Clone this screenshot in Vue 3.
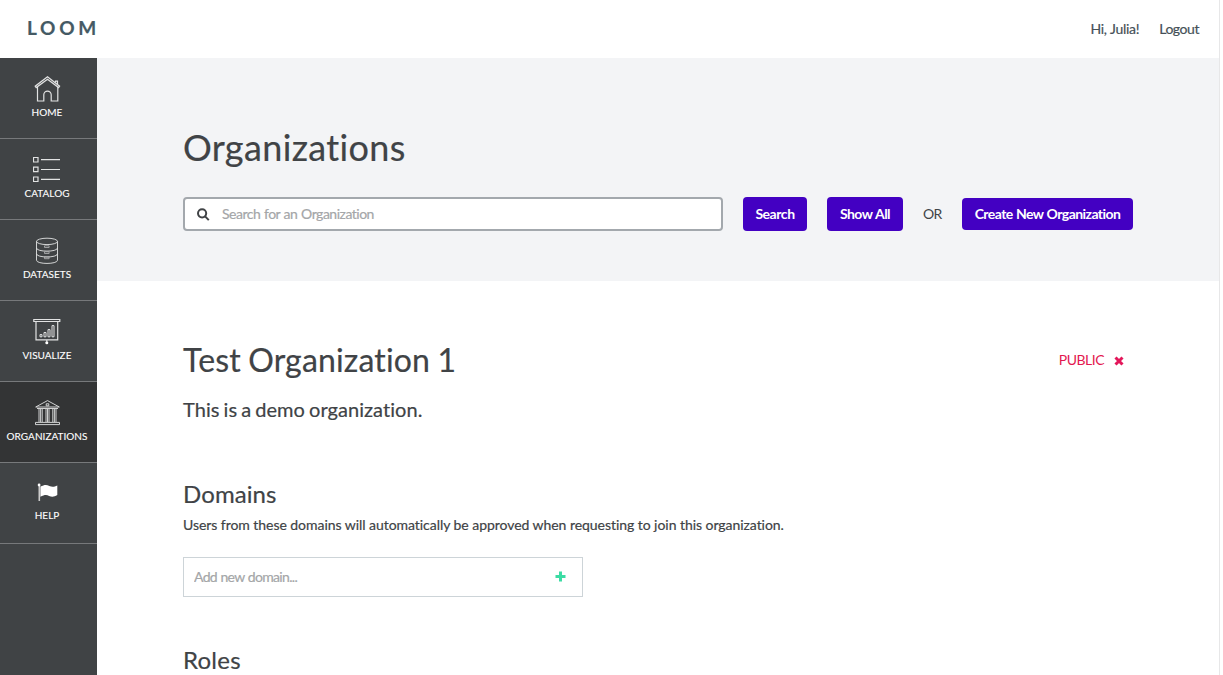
<script setup>
import { ref } from 'vue'

const items = [
  { id: 'home', label: 'Home' },
  { id: 'catalog', label: 'Catalog' },
  { id: 'datasets', label: 'Datasets' },
  { id: 'visualize', label: 'Visualize' },
  { id: 'organizations', label: 'Organizations' },
  { id: 'help', label: 'Help' },
]
const active = ref('organizations')
const query = ref('')
const domain = ref('')
</script>

<template>
  <div class="app">
    <header class="topbar">
      <div class="logo">LOOM</div>
      <nav class="account">
        <a class="hi">Hi, Julia!</a>
        <a class="logout">Logout</a>
      </nav>
    </header>
    <div class="body">
      <aside class="sidebar">
        <a
          v-for="item in items"
          :key="item.id"
          class="item"
          :class="[item.id, { active: active === item.id }]"
          @click="active = item.id"
        >
          <svg v-if="item.id === 'home'" class="icon" viewBox="0 0 30 30">
            <path d="M3.2 12.6 2.2 11.2 14.5 1.8 26.6 11.2 25.6 12.6 14.5 4.2Z" />
            <path d="M4.5 12v14h6.3v-6.2a3.4 3.4 0 0 1 7.4 0V26h6.6V12M22.5 7.5V6.2h2v3" />
          </svg>
          <svg v-else-if="item.id === 'catalog'" class="icon" viewBox="0 0 30 30">
            <path d="M.5 1.5h4.5v4.5h-4.5zM.5 11.2h4.5v4.5h-4.5zM.5 21h4.5v4.5h-4.5zM8 3.7h19M8 13.5h19M8 23.3h19" />
          </svg>
          <svg v-else-if="item.id === 'datasets'" class="icon thin" viewBox="0 0 30 30">
            <ellipse cx="14" cy="4.4" rx="10.5" ry="3.2" />
            <path d="M3.5 4.4v18.8c0 4.3 21 4.3 21 0V4.4M3.5 11c0 4.2 21 4.2 21 0M3.5 16.8c0 4.2 21 4.2 21 0" />
            <path class="slots" d="M11.5 8.8h4.6v1.7h-4.6zM11.5 14.8h4.6v1.7h-4.6zM11.5 20h4.6v1.7h-4.6z" />
          </svg>
          <svg v-else-if="item.id === 'visualize'" class="icon" viewBox="0 0 30 30">
            <path d="M.8 1.5h26v2h-26zM3 3.5v18.3h21.7V3.5M13.8 21.8v2" />
            <circle class="solid" cx="13.8" cy="24.7" r="1.5" />
            <path class="bars" d="M7 16.6h2v2.2h-2zM11 14.5h2v4.3h-2zM15 11.6h2v7.2h-2zM19 7.6h2v11.2h-2z" />
          </svg>
          <svg v-else-if="item.id === 'organizations'" class="icon thin" viewBox="0 0 30 30">
            <path d="M2.7 8 14.5 1.6 26.3 8ZM4 9.5h21M13.2 4.8h2.6v2h-2.6z" />
            <path d="M6 10V23M7.6 10V23M9.2 10V23M13 10V23M14.5 10V23M16 10V23M19.8 10V23M21.4 10V23M23 10V23" />
            <path d="M2.5 25.6v-2.2h24v2.2z" />
          </svg>
          <svg v-else class="icon flag" viewBox="0 0 30 30">
            <path class="pole" d="M6.3 4.5V20" />
            <circle class="solid" cx="6.1" cy="4" r="1.4" />
            <path class="solid" d="M7.4 5.6C11.3 3.8 13.4 3.5 16.3 5c3 1.4 5.2.8 8-.5V14c-3 1.9-5.4 2.2-8.2.9-3-1.5-5.2-.7-8.7.9Z" />
          </svg>
          <span class="label">{{ item.label }}</span>
        </a>
      </aside>
      <main class="main">
        <section class="hero">
          <h1 class="title">Organizations</h1>
          <form class="search-row" @submit.prevent>
            <label class="search-box">
              <svg class="glass" viewBox="0 0 13 13">
                <circle cx="5.1" cy="5.3" r="4.1" />
                <path d="M8.1 8.4 11.8 12.1" />
              </svg>
              <input v-model="query" class="search-input" placeholder="Search for an Organization" />
            </label>
            <button class="btn search">Search</button>
            <button class="btn show">Show All</button>
            <span class="or">OR</span>
            <button class="btn create">Create New Organization</button>
          </form>
        </section>
        <section class="content">
          <div class="org-head">
            <h2 class="org-name">Test Organization 1</h2>
            <span class="visibility">
              PUBLIC
              <svg class="cross" viewBox="0 0 10 10"><path d="M1.5 1.5 8.5 8.5M8.5 1.5 1.5 8.5" /></svg>
            </span>
          </div>
          <p class="desc">This is a demo organization.</p>
          <h3 class="sub domains">Domains</h3>
          <p class="hint">Users from these domains will automatically be approved when requesting to join this organization.</p>
          <label class="domain-box">
            <input v-model="domain" class="domain-input" placeholder="Add new domain..." />
            <svg class="plus" viewBox="0 0 11 11"><path d="M5.5.5v10M.5 5.5h10" /></svg>
          </label>
          <h3 class="sub roles">Roles</h3>
        </section>
      </main>
    </div>
  </div>
</template>

<style>
html, body { margin: 0; overflow: hidden; background: #fff; }
</style>

<style scoped>
.app {
  box-sizing: border-box;
  width: 1220px;
  height: 675px;
  overflow: hidden;
  display: flex;
  flex-direction: column;
  border-right: 1px solid #e7e7e8;
  font-family: Lato, "Liberation Sans", sans-serif;
  font-size: 14px;
  font-variant-ligatures: none;
  -webkit-text-stroke: .2px currentColor;
  color: #404346;
  white-space: nowrap;
}
h1, h2, h3, p { margin: 0; font-weight: 400; }
.topbar {
  height: 58px;
  flex: none;
  display: flex;
  justify-content: space-between;
  padding: 0 20px 0 27px;
  color: #455a64;
}
.logo { font-size: 19px; line-height: 56px; font-weight: 700; letter-spacing: 3.7px; }
.account { display: flex; gap: 20px; line-height: 58px; color: #455057; letter-spacing: -.3px; word-spacing: .6px; }
.logout { letter-spacing: -.45px; }
.body { flex: 1; min-height: 0; display: flex; }
.sidebar { width: 97px; flex: none; background: #404345; }
.item {
  box-sizing: border-box;
  height: 81px;
  display: flex;
  flex-direction: column;
  align-items: center;
  padding-top: 17px;
  border-bottom: 1px solid #77797b;
  color: #fff;
  cursor: pointer;
}
.item.active { background: #333435; }
.item.help { padding-top: 18px; }
.icon {
  width: 30px;
  height: 30px;
  margin-right: 2px;
  fill: none;
  stroke: #e2e3e3;
  stroke-width: 1.2;
}
.thin { stroke-width: .9; }
.slots { stroke: #b5b6b7; stroke-width: .8; }
.bars { stroke-width: 1; }
.solid { fill: #fff; stroke: none; }
.pole { stroke: #ccc; stroke-width: 1.6; }
.label {
  margin-top: 1px;
  margin-right: 3px;
  font-size: 10px;
  line-height: 13px;
  letter-spacing: .03px;
  text-transform: uppercase;
  -webkit-text-stroke: .1px currentColor;
}
.help .label { margin-top: -2px; }
.main { flex: 1; }
.hero { box-sizing: border-box; height: 223px; padding: 65px 0 0 86px; background: #f3f4f6; }
.title { font-size: 36px; line-height: 48px; letter-spacing: .36px; }
.search-row { display: flex; align-items: center; margin-top: 26px; }
.search-box {
  box-sizing: border-box;
  width: 540px;
  height: 34px;
  display: flex;
  align-items: center;
  padding-left: 12px;
  border: 2px solid #a3a8ad;
  border-radius: 4px;
  background: #fff;
}
.glass { width: 13px; height: 13px; margin-top: 1px; fill: none; stroke: #404346; stroke-width: 2; }
input {
  min-width: 0;
  padding: 0 0 2px;
  border: 0;
  outline: 0;
  background: none;
  font: inherit;
  color: inherit;
}
input::placeholder { color: #a4a6a8; opacity: 1; }
.search-input { flex: 1; margin-left: 12px; letter-spacing: -.49px; word-spacing: .6px; }
.btn {
  height: 34px;
  margin: 0;
  padding: 0 0 1px;
  border: 0;
  border-radius: 4px;
  background: #4300c2;
  font: 700 14px Lato, "Liberation Sans", sans-serif;
  letter-spacing: -.56px;
  word-spacing: .5px;
  color: #fff;
  -webkit-text-stroke: 0;
}
.search { width: 64px; margin-left: 20px; letter-spacing: -.45px; }
.show { width: 76px; margin-left: 20px; }
.or { width: 19px; margin: 0 20px; padding-bottom: 2px; letter-spacing: -.8px; -webkit-text-stroke: 0; }
.create { width: 171px; height: 32px; }
.content { padding: 56px 95px 0 86px; }
.org-head { display: flex; justify-content: space-between; align-items: center; height: 46px; }
.org-name { font-size: 32px; line-height: 46px; letter-spacing: .16px; word-spacing: -1px; }
.visibility { display: flex; align-items: center; gap: 10px; margin-top: -2px; color: #e3174f; letter-spacing: -.5px; -webkit-text-stroke: 0; }
.cross { width: 10px; height: 10px; margin-top: 3px; fill: none; stroke: #e3175a; stroke-width: 3; }
.desc { margin-top: 12px; font-size: 20px; line-height: 28px; letter-spacing: .05px; word-spacing: -1.1px; }
.sub { font-size: 24px; line-height: 32px; letter-spacing: .1px; }
.domains { margin-top: 55px; }
.hint { margin-top: 5px; line-height: 20px; letter-spacing: -.047px; }
.domain-box {
  box-sizing: border-box;
  width: 400px;
  height: 40px;
  display: flex;
  align-items: center;
  margin-top: 22px;
  padding: 0 16px 0 10px;
  border: 1px solid #cdd4d8;
}
.domain-input { flex: 1; letter-spacing: -.66px; word-spacing: .5px; }
.plus { width: 11px; height: 11px; margin-bottom: 2px; fill: none; stroke: #3cdca4; stroke-width: 3; }
.roles { margin-top: 47px; letter-spacing: .25px; }
</style>
